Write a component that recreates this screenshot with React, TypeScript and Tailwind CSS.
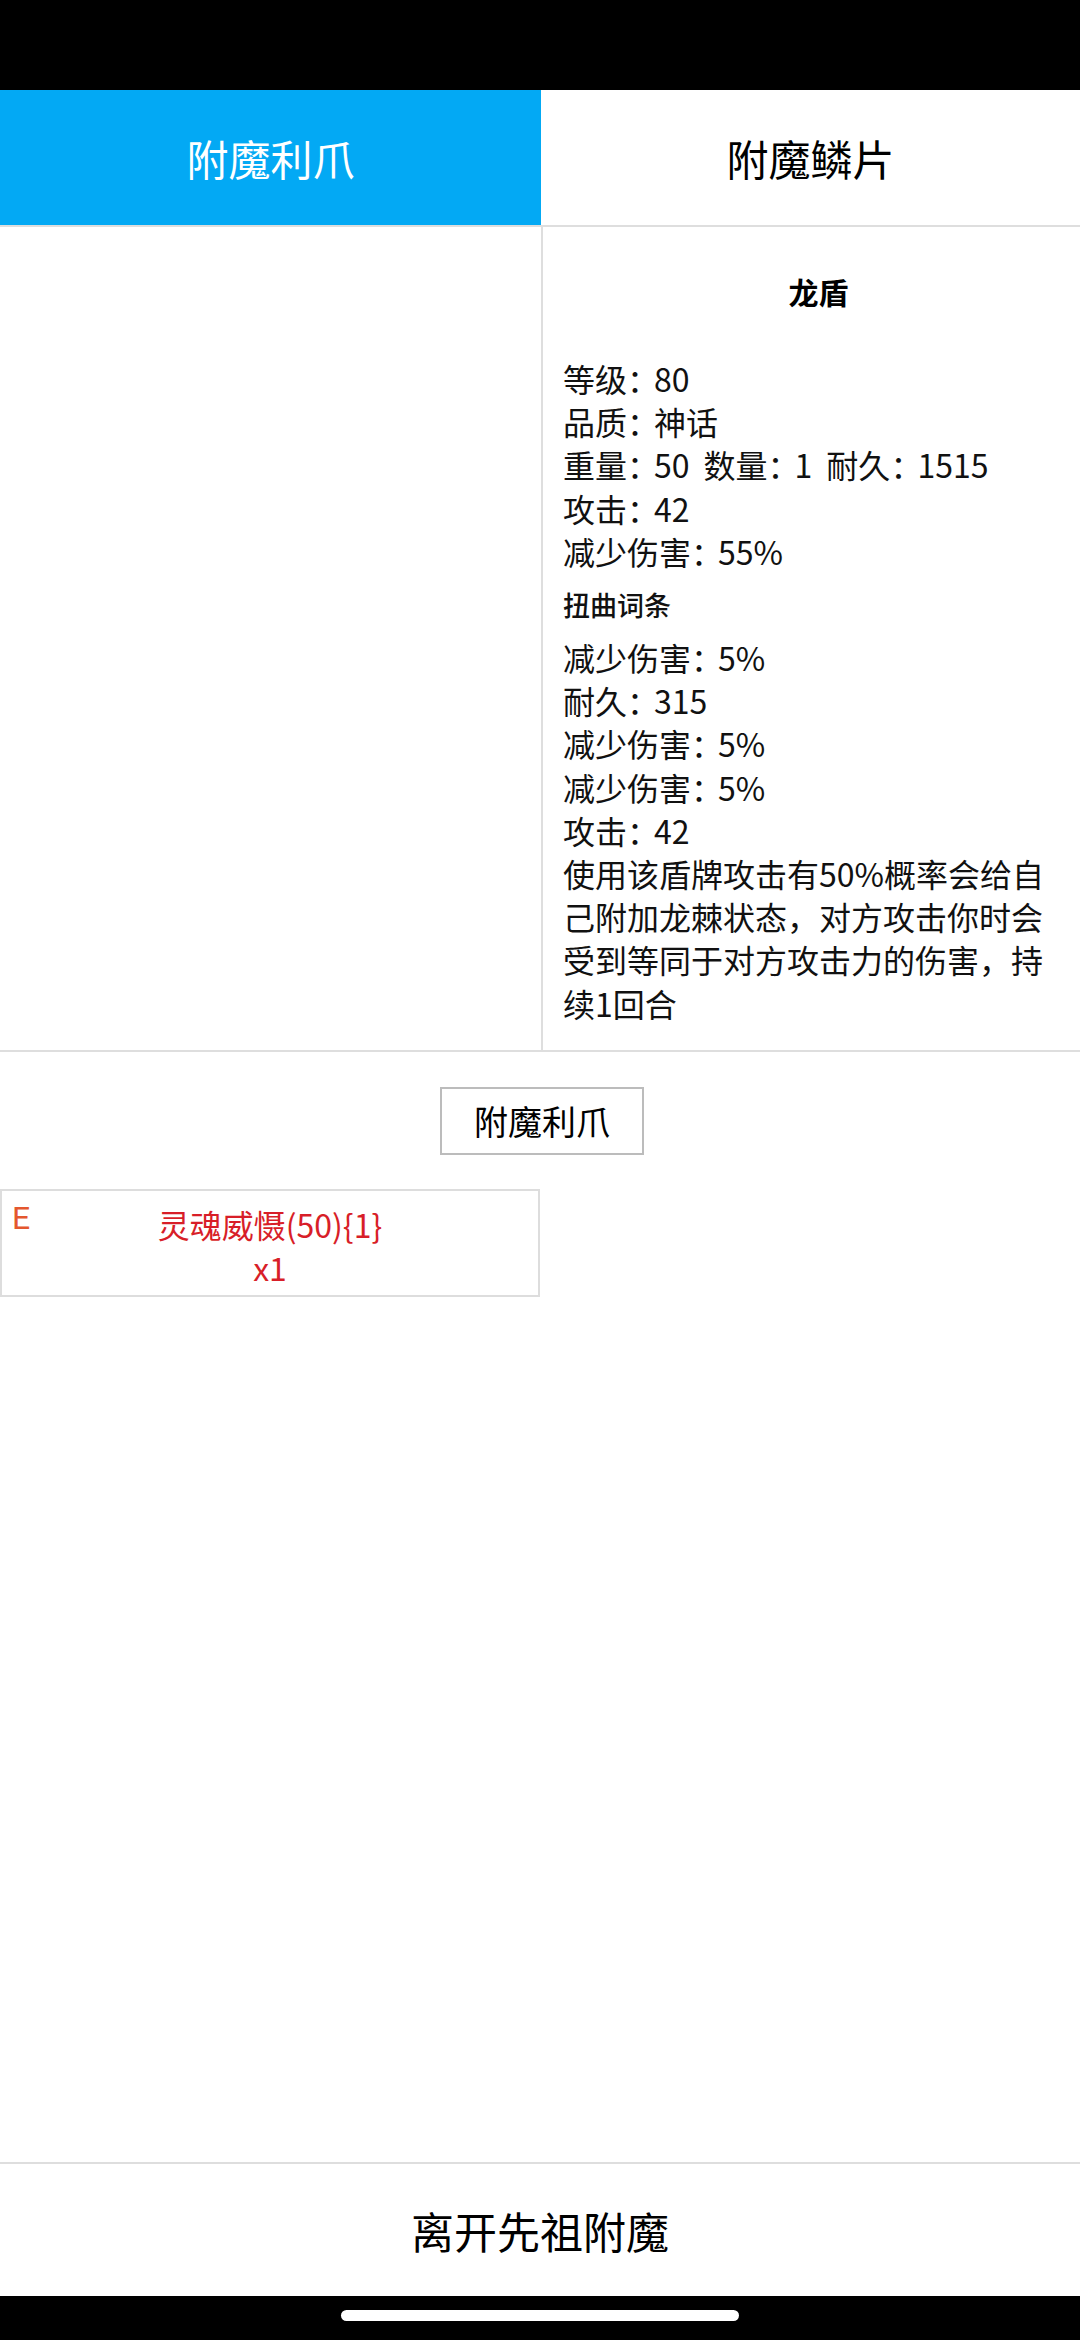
import React from 'react';

type Field = [string, string];

const baseLines: Field[][] = [
  [['等级', '80']],
  [['品质', '神话']],
  [['重量', '50'], ['数量', '1'], ['耐久', '1515']],
  [['攻击', '42']],
  [['减少伤害', '55%']],
];

const affixLines: Field[] = [
  ['减少伤害', '5%'],
  ['耐久', '315'],
  ['减少伤害', '5%'],
  ['减少伤害', '5%'],
  ['攻击', '42'],
];

const Pair = ({ label, value }: { label: string; value: string }) => (
  <span>
    {label}
    <span className="tracking-[-5px]">：</span>
    {value}
  </span>
);

const App = () => {
  return (
    <div className="h-[2340px] w-[1080px] flex flex-col bg-white text-[#111] font-['Noto_Sans_CJK_SC','Noto_Sans',sans-serif]">
      {/* status bar */}
      <div className="h-[90px] bg-black shrink-0" />

      {/* tabs */}
      <div className="grid grid-cols-[541px_1fr] h-[137px] border-b-2 border-[#dedede] shrink-0">
        <button className="bg-[#03a9f4] text-white text-[42px] flex items-center justify-center">附魔利爪</button>
        <button className="bg-white text-black text-[42px] flex items-center justify-center">附魔鳞片</button>
      </div>

      {/* item detail */}
      <div className="grid grid-cols-[541px_1fr] border-b-2 border-[#dedede] shrink-0">
        <div />
        <div className="border-l-2 border-[#dedede] pl-[20px] pr-[6px] pt-[43px] pb-[25px]">
          <h2 className="text-center text-[30px] font-bold leading-[43px] text-black">龙盾</h2>
          <div className="mt-[44px] text-[32px] leading-[43.2px]">
            {baseLines.map((line, i) => (
              <div key={i} className="flex gap-[14px]">
                {line.map(([label, value]) => (
                  <Pair key={label} label={label} value={value} />
                ))}
              </div>
            ))}
          </div>
          <div className="mt-[12px] text-[27px] font-medium leading-[40px]">扭曲词条</div>
          <div className="mt-[11px] text-[32px] leading-[43.2px]">
            {affixLines.map(([label, value], i) => (
              <div key={i}>
                <Pair label={label} value={value} />
              </div>
            ))}
            <div>使用该盾牌攻击有50%概率会给自己附加龙棘状态，对方攻击你时会受到等同于对方攻击力的伤害，持续1回合</div>
          </div>
        </div>
      </div>

      {/* enchant button */}
      <div className="flex justify-center mt-[35px] pl-[4px]">
        <button className="w-[204px] h-[68px] border-2 border-[#bcbcbc] bg-white text-[34px] text-black flex items-center justify-center">
          附魔利爪
        </button>
      </div>

      {/* material list */}
      <div className="mt-[34px] grid grid-cols-[540px_1fr]">
        <div className="relative border-2 border-[#dddddd] h-[108px] pt-[12px] text-center text-[32px] leading-[43px] text-[#d81e28]">
          <span className="absolute left-[10px] top-[11px] text-[32px] leading-none text-[#e4572e] font-['Roboto',sans-serif]">E</span>
          <div>灵魂威慑(50){'{'}1{'}'}</div>
          <div>x1</div>
        </div>
      </div>

      <div className="flex-1" />

      {/* leave */}
      <div className="border-t-2 border-[#dedede] h-[134px] flex items-center justify-center shrink-0">
        <span className="text-[43px] text-black">离开先祖附魔</span>
      </div>

      {/* navigation bar */}
      <div className="h-[44px] bg-black flex justify-center pt-[14px] shrink-0">
        <div className="w-[398px] h-[11px] rounded-full bg-white" />
      </div>
    </div>
  );
};

export default App;
